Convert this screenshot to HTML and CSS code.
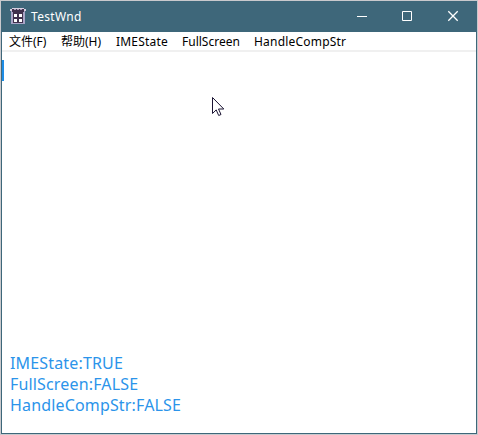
FILE: index.html
```html
<!DOCTYPE html>
<html lang="zh-CN">
<head>
<meta charset="utf-8">
<title>TestWnd</title>
<link rel="stylesheet" href="styles.css">
</head>
<body>
<div class="window">
  <header class="titlebar">
    <svg class="app-icon" width="16" height="16" viewBox="0 0 16 16" shape-rendering="crispEdges">
      <path d="M1 2h14v14H1z" fill="#a9a4c6"/>
      <path d="M0 1h3v2H0zM13 1h3v2h-3zM2 0h12v1H2z" fill="#d6cfe0"/>
      <path d="M2 1h12v3H2zM3 4h10v11H3z" fill="#40304c"/>
      <path d="M4 6h3v3H4zM9 6h3v3H9zM4 11h3v3H4zM9 11h3v3H9z" fill="#fff"/>
      <path d="M4 1h2v1H4zM10 1h2v1h-2zM7 1h2v1H7z" fill="#a79db8"/>
    </svg>
    <span class="title">TestWnd</span>
    <div class="controls">
      <svg width="46" height="30" viewBox="0 0 46 30"><path d="M19 14.500h10" stroke="#fff"/></svg>
      <svg width="46" height="30" viewBox="0 0 46 30"><path d="M18.500 9.500h9v9h-9z" fill="none" stroke="#fff"/></svg>
      <svg width="46" height="30" viewBox="0 0 46 30"><path d="M18.300 9.300l9.400 9.400m0-9.400l-9.400 9.400" stroke="#fff" stroke-width="1.300"/></svg>
    </div>
  </header>
  <nav class="menu">
    <span class="item file">文件(F)</span>
    <span class="item help">帮助(H)</span>
    <span class="item ime">IMEState</span>
    <span class="item full">FullScreen</span>
    <span class="item comp">HandleCompStr</span>
  </nav>
  <main class="client">
    <div class="caret"></div>
    <div class="status">
      <div class="line-ime">IMEState:TRUE</div>
      <div class="line-full">FullScreen:FALSE</div>
      <div class="line-comp">HandleCompStr:FALSE</div>
    </div>
  </main>
</div>
<svg class="pointer" width="13" height="20" viewBox="0 0 13 20"><path d="M.5.500v16l3.700-3.600 2.500 5.600 2.300-1-2.500-5.500h5.300z" fill="#fff" stroke="#1b1433"/></svg>
</body>
</html>
```
FILE: styles.css
```css
* { box-sizing: border-box; }
body {
  margin: 0;
  padding: 1px;
  height: 435px;
  overflow: hidden;
  background: #c9c9cd;
  font-family: "Noto Sans", "Noto Sans CJK SC", sans-serif;
}
.window {
  width: 476px;
  height: 433px;
  display: flex;
  flex-direction: column;
  background: #fff;
  border: 1px solid #3e677a;
}
.titlebar {
  flex: 0 0 30px;
  display: flex;
  background: #3e677a;
  color: #fff;
}
.app-icon { margin: 6px 5px 0 8px; }
.title {
  font-size: 12px;
  line-height: 29px;
  letter-spacing: 0.3px;
}
.controls { display: flex; margin-left: auto; }
.controls svg { display: block; }
.menu {
  flex: 0 0 20px;
  height: 20px;
  min-height: 0;
  display: flex;
  padding-left: 7px;
  border-bottom: 2px solid #f0f0f0;
  font-size: 12px;
  line-height: 19px;
  color: #000;
  white-space: nowrap;
}
.file { width: 52px; }
.help { width: 55px; }
.ime { width: 66px; letter-spacing: 0.2px; }
.full { width: 72px; }
.comp { letter-spacing: 0.2px; }
.client {
  flex: 1;
  display: flex;
  flex-direction: column;
  justify-content: space-between;
  padding: 8px 0 17px;
}
.caret { width: 2px; height: 21px; background: #1e8ce6; }
.status {
  padding-left: 8px;
  font-size: 16px;
  line-height: 21px;
  letter-spacing: 0.16px;
  color: #2b94ea;
}
.pointer { position: absolute; left: 212px; top: 97px; }
```
